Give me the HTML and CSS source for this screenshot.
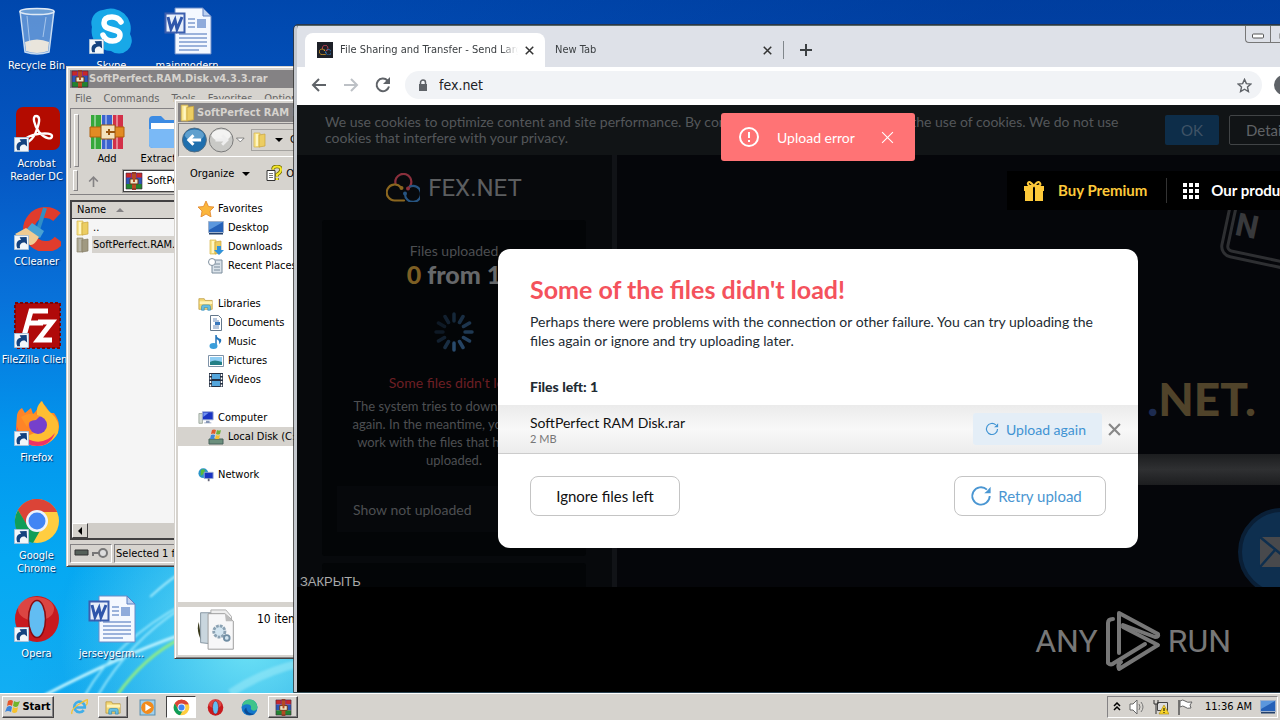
FILE: index.html
```html
<!DOCTYPE html>
<html lang="en">
<head>
<meta charset="utf-8">
<title>Desktop</title>
<link rel="stylesheet" href="styles.css">
</head>
<body>
<svg class="defs" aria-hidden="true">
  <symbol id="arrow" viewBox="0 0 16 16"><path d="M.5.5h15v15H.5z" fill="#f2f6fa" stroke="#a9c0d8"/><path d="M3.500 14c-2-5 0-9 4-9L6 2.500 13.500 2l.5 8-2.500-2c-4 0-6 2-5 6z" fill="#14427f"/></symbol>
  <symbol id="word" viewBox="0 0 48 48"><path d="M11 1h28l8 8v38H11z" fill="#f4f8ff" stroke="#6b8cc8"/><path d="M39 1v8h8z" fill="#bcd0f0" stroke="#5d7fc0"/><path d="M24 12h7M24 16h7M24 20h7M15 27h28M15 31h28M15 35h28M15 39h28M15 43h20" stroke="#7d9bd0" stroke-width="1.500"/><path d="M33 12h9v9h-9z" fill="#8fabdb"/><path d="M1.500 6.500h19v19h-19z" fill="#e8effa" stroke="#3c5fae" stroke-width="2"/><path d="M4 10l3 12 4-9 2 9 5-12" fill="none" stroke="#2f56ab" stroke-width="3"/></symbol>
  <symbol id="rar" viewBox="0 0 18 18"><path d="M1 1h16v5H1z" fill="#8c2c7c"/><path d="M1 6h16v6H1z" fill="#2b56b6"/><path d="M1 12h16v5H1z" fill="#218331"/><path d="M1 1h5v4H1zM12 1h5v4h-5z" fill="#c82828"/><path d="M7 0h4v18H7z" fill="#b54b22"/><path d="M5 7h8v5H5z" fill="#eee3c3" stroke="#6e3210"/><path d="M8 6h2v4H8z" fill="#b54b22"/><path d="M1 1h16v16H1z" fill="none" stroke="#40243c" stroke-width=".6"/></symbol>
  <symbol id="folder" viewBox="0 0 16 16"><path d="M2 1h6v14H2z" fill="#f8e48c" stroke="#d7b54c" stroke-width=".7"/><path d="M7 3l6-1v12l-6 1z" fill="#eccd62" stroke="#c9a43d" stroke-width=".7"/><path d="M4 2h2v12H4z" fill="#fff6c2"/></symbol>
  <symbol id="chrome" viewBox="0 0 48 48"><circle cx="24" cy="24" r="22" fill="#ffcd40"/><path d="M5 13A22 22 0 0 1 43 13L44 15H24z" fill="#db4437"/><path d="M5 13l9 16a11 11 0 0 1 10-14h20A22 22 0 0 0 5 13z" fill="#db4437"/><path d="M5 13a22 22 0 0 0 15 33l8-14q-9 3-14-4z" fill="#0f9d58"/><circle cx="24" cy="24" r="11" fill="#eef3fd"/><circle cx="24" cy="24" r="8.500" fill="#4285f4"/></symbol>
  <symbol id="opera" viewBox="0 0 48 48"><ellipse cx="24" cy="24" rx="22" ry="23" fill="#c81a1f"/><ellipse cx="23" cy="14" rx="18" ry="12" fill="#ec6a5e" opacity=".55"/><ellipse cx="24" cy="24" rx="8.500" ry="18.500" fill="#62bdf2"/><ellipse cx="24" cy="24" rx="8.500" ry="18.500" fill="none" stroke="#8a0c10" stroke-width="1.500"/></symbol>
  <symbol id="explorer" viewBox="0 0 18 16"><path d="M1 2h6l1 2h8v10H1z" fill="#f3d774" stroke="#b8963b" stroke-width=".8"/><path d="M2 5h14v3H2z" fill="#fff3b6"/><path d="M4 15v-4q0-2 2-2h6q2 0 2 2v4h-3v-3H7v3z" fill="#65bfe4" stroke="#2f88b5" stroke-width=".7"/></symbol>
  <symbol id="monitor" viewBox="0 0 16 14"><path d="M.5.5h15v11H.5z" fill="#2561b8" stroke="#9fb2cc"/><path d="M1 1h14l-14 8z" fill="#5b97dd"/><path d="M1 12h14v1.500H1z" fill="#23406b"/></symbol>
  <symbol id="pc" viewBox="0 0 18 16"><path d="M1 3h4v11H1z" fill="#d3dbd4" stroke="#7e8d80" stroke-width=".7"/><path d="M5 1h12v9H5z" fill="#1a35c2" stroke="#9aaad2"/><path d="M6 2h6l-6 5z" fill="#6f92f0"/><path d="M9 11h4v2h2v1H7v-1h2z" fill="#8394b5"/></symbol>
  <symbol id="retry" viewBox="0 0 24 24"><path d="M21.500 12a9.500 9.500 0 1 1-3-7" fill="none" stroke="currentColor" stroke-width="2"/><path d="M22.500 2v7h-7l3-2.500z" fill="currentColor"/></symbol>
  <symbol id="cross" viewBox="0 0 12 12"><path d="M1 1l10 10M11 1L1 11" fill="none" stroke="currentColor"/></symbol>
  <symbol id="cloud" viewBox="0 0 34 28"><g fill="none" stroke-width="2.200" stroke-linecap="round"><path d="M9.500 10a8 8 0 1 1 13 4.500" stroke="#e2495c"/><path d="M18 27H9a8 8 0 1 1 6-13" stroke="#e3a52c"/><path d="M19 20a8 8 0 1 0 5-7" stroke="#3c86cf"/></g><circle cx="15.500" cy="14.500" r="2" fill="#e3a52c"/><circle cx="22" cy="15" r="2" fill="#e2495c"/><circle cx="19" cy="20" r="2" fill="#3c86cf"/></symbol>
</svg>

<main class="desktop">
  <svg class="wallpaper" viewBox="0 0 300 692" preserveAspectRatio="xMinYMax slice" aria-hidden="true">
    <defs><filter id="soft"><feGaussianBlur stdDeviation="1.200"/></filter></defs>
    <g fill="none" filter="url(#soft)"><path d="M45 694Q120 655 180 634T300 596" stroke="#bdf3ff" stroke-width="3"/><path d="M85 694Q115 640 185 602" stroke="#8fe4fb" stroke-width="2"/><path d="M98 694Q130 640 180 608" stroke="#8fe4fb" stroke-width="2"/><path d="M117 694Q145 655 180 638" stroke="#8deb8a" stroke-width="3"/><path d="M150 596Q165 582 180 572" stroke="#a7ecfc" stroke-width="2"/><path d="M230 692Q260 672 300 662" stroke="#a3eefa" stroke-width="8" opacity=".5"/></g>
  </svg>

  <nav class="shortcuts" aria-label="Desktop icons">
    <a href="#" class="shortcut c1 r1"><svg viewBox="0 0 48 48"><path d="M7 4h34l-5 41q-12 4-24 0z" fill="#8bb6e6" opacity=".65"/><path d="M12 35q12-5 24 0l-1 9q-11 4-22 0z" fill="#e9e5dc"/><path d="M7 4l5 41q12 4 24 0l5-41" fill="none" stroke="#c8dcf2" stroke-width="1.500"/><ellipse cx="24" cy="4.500" rx="17" ry="3" fill="#6d9fd6" stroke="#dfe9f5" stroke-width="1.500"/><path d="M14 9l3 30M33 10l-3 20" stroke="#d9e9fa" opacity=".6"/></svg><span>Recycle Bin</span></a>
    <a href="#" class="shortcut c2 r1"><svg viewBox="0 0 48 48"><path d="M15 3a20 20 0 0 1 27 24 13 13 0 0 1-19 17A20 20 0 0 1 4 20 13 13 0 0 1 15 3z" fill="#18a8e8"/><path d="M33 15q-3-5-9-5-8 0-8 6c0 9 16 4 16 12 0 8-14 8-17 0" fill="none" stroke="#fff" stroke-width="5.500" stroke-linecap="round"/><use href="#arrow" x="1" y="32" width="15" height="15"/></svg><span>Skype</span></a>
    <a href="#" class="shortcut c3 r1"><svg><use href="#word"/></svg><span>mainmodern...</span></a>
    <a href="#" class="shortcut c1 r2"><svg viewBox="0 0 48 48"><rect x="3" y="2" width="44" height="43" rx="7" fill="#b30b00"/><path d="M23 11c-4 0-2 9 3 16 6 7 13 8 13 4 0-5-25-2-27 4-1 5 8 2 12-11 3-8 3-13-1-13z" fill="none" stroke="#fff" stroke-width="2.400"/><use href="#arrow" x="1" y="32" width="15" height="15"/></svg><span>Acrobat Reader DC</span></a>
    <a href="#" class="shortcut c1 r3"><svg viewBox="0 0 48 48"><path d="M44 14A17 17 0 1 0 46 37" fill="none" stroke="#e03c2c" stroke-width="11"/><path d="M32 5l-7 22" stroke="#2f8ec6" stroke-width="4"/><path d="M19 20l12 8-4 7-14-8z" fill="#48a2d2"/><path d="M13 25l13 9q-5 9-9 8L2 31z" fill="#f0cb92"/><use href="#arrow" x="1" y="32" width="15" height="15"/></svg><span>CCleaner</span></a>
    <a href="#" class="shortcut c1 r4"><svg viewBox="0 0 48 48"><path d="M2 2h45v45H2z" fill="#b00a0a" stroke="#7c0505" stroke-width="2" stroke-dasharray="3 2"/><path d="M11 35L18 10h17M15 22h15M25 21h14L25 39h14" fill="none" stroke="#fff" stroke-width="5"/><use href="#arrow" x="1" y="32" width="15" height="15"/></svg><span class="nowrap">FileZilla Client</span></a>
    <a href="#" class="shortcut c1 r5"><svg viewBox="0 0 48 48"><path d="M4 16q1-5 5-7l3 5 6-5 2 6q5-4 8-13 6 6 9 12l4 0q9 12 2 23-7 10-19 10Q5 46 3 29z" fill="#ff8427"/><path d="M24 14q-1-7 5-12 3 7 9 12 10 8 7 20-8 13-22 13-9-1-16-7l17-7z" fill="#ffbe32"/><path d="M3 24q2 14 17 18 13 3 22-8-5 13-18 13Q5 46 3 24z" fill="#ef3366"/><circle cx="25" cy="26" r="9" fill="#7540cc"/><path d="M8 18q9-6 19-1l-4 4q-8 0-9 7z" fill="#ff9425"/><use href="#arrow" x="1" y="32" width="15" height="15"/></svg><span>Firefox</span></a>
    <a href="#" class="shortcut c1 r6"><svg viewBox="0 0 48 48"><use href="#chrome" width="48" height="48"/><use href="#arrow" x="1" y="32" width="15" height="15"/></svg><span>Google Chrome</span></a>
    <a href="#" class="shortcut c1 r7"><svg viewBox="0 0 48 48"><use href="#opera" width="48" height="48"/><use href="#arrow" x="1" y="32" width="15" height="15"/></svg><span>Opera</span></a>
    <a href="#" class="shortcut c2 r7"><svg><use href="#word"/></svg><span class="nowrap">jerseygerm...</span></a>
  </nav>

  <section class="window winrar" aria-label="WinRAR">
    <header class="caption"><svg class="i18"><use href="#rar"/></svg>SoftPerfect.RAM.Disk.v4.3.3.rar</header>
    <div class="menubar"><span>File</span><span>Commands</span><span>Tools</span><span>Favorites</span><span>Options</span></div>
    <div class="toolbar">
      <button class="tool"><svg viewBox="0 0 36 36"><path d="M2 1h10v34H2z" fill="#35a83a"/><path d="M13 1h10v34H13z" fill="#3a63cf"/><path d="M24 1h10v34H24z" fill="#d33049"/><path d="M5 1h2v34H5zM16 1h2v34h-2zM27 1h2v34h-2z" fill="#fff" opacity=".4"/><path d="M1 13h34v10H1z" fill="#e28b23" stroke="#b1600c"/><path d="M12 11h14v14H12z" fill="#f4e2bd" stroke="#9a5712"/><path d="M17 18h9M20 15v6" stroke="#9a5712" stroke-width="2"/></svg><span>Add</span></button>
      <button class="tool"><svg viewBox="0 0 36 36"><path d="M2 6q0-4 4-4h8l4 4h14q4 0 4 4v20q0 4-4 4H6q-4 0-4-4z" fill="#3c8be3"/><path d="M4 9h30v8H4z" fill="#fff"/><path d="M2 15h34v15q0 4-4 4H6q-4 0-4-4z" fill="#7ab9f6"/></svg><span>Extract To</span></button>
    </div>
    <div class="pathbar"><svg class="up" viewBox="0 0 12 12"><path d="M6 11V2M2 6l4-4 4 4" fill="none" stroke="#848284" stroke-width="1.500"/></svg><div class="path"><svg class="i18"><use href="#rar"/></svg>SoftPerfect.RAM</div></div>
    <div class="filelist">
      <div class="colhead">Name<i></i></div>
      <div class="file"><svg class="i16"><use href="#folder"/></svg><span>..</span></div>
      <div class="file picked"><svg class="i16 dim"><use href="#folder"/></svg><span>SoftPerfect.RAM.Disk</span></div>
      <div class="scroll"><button aria-label="Scroll left"><svg viewBox="0 0 8 8"><path d="M6 0v8L2 4z"/></svg></button></div>
    </div>
    <footer class="status"><div class="cell icons"><svg viewBox="0 0 36 12"><path d="M1 3h13v5H1z" fill="#56615a" stroke="#333"/><circle cx="29" cy="6" r="4" fill="#ddd" stroke="#777" stroke-width="2"/><path d="M25 6h-6v3" stroke="#777" stroke-width="2" fill="none"/></svg></div><div class="cell">Selected 1 folder</div></footer>
  </section>

  <section class="window files" aria-label="Explorer">
    <header class="caption"><svg class="i18"><use href="#folder"/></svg>SoftPerfect RAM Disk</header>
    <div class="navbar">
      <svg class="back" viewBox="0 0 68 28"><circle cx="13" cy="14" r="12.500" fill="#1f6fae" stroke="#516b80"/><ellipse cx="13" cy="9" rx="10" ry="6" fill="#7ab4da" opacity=".7"/><path d="M20 14H8M12 9l-5 5 5 5" fill="none" stroke="#fff" stroke-width="3"/><circle cx="41" cy="14" r="12.500" fill="#c9c9c6" stroke="#777"/><ellipse cx="41" cy="9" rx="10" ry="6" fill="#f3f3f2"/><path d="M35 14h11M42 9l5 5-5 5" fill="none" stroke="#eee" stroke-width="3"/><path d="M57 12h8l-4 4z" fill="#fff" stroke="#555" stroke-width=".7"/></svg>
      <div class="address"><svg class="i16"><use href="#folder"/></svg><i class="down"></i>Co</div>
    </div>
    <div class="commands"><span>Organize</span><i class="down"></i><svg viewBox="0 0 16 16"><path d="M1 5h8v10H1z" fill="#fff" stroke="#333"/><path d="M3 8h4M3 10h4M3 12h4" stroke="#777"/><path d="M7 4q0-3 4-3t4 3-4 5v2m0 1.500v2" fill="none" stroke="#6e6800" stroke-width="3.500"/><path d="M7 4q0-3 4-3t4 3-4 5v2m0 1.500v2" fill="none" stroke="#f5e72c" stroke-width="2"/></svg><span>Open</span></div>
    <ul class="tree">
      <li><svg viewBox="0 0 16 16"><path d="M8 0l2.500 5.500 5.500.5-4 4 1 6-5-3-5 3 1-6L0 6l5.500-.5z" fill="#fbb63c" stroke="#e08428" stroke-width=".8"/></svg>Favorites</li>
      <li class="sub"><svg><use href="#monitor"/></svg>Desktop</li>
      <li class="sub"><svg viewBox="0 0 16 16"><use href="#folder" width="16" height="16"/><path d="M9 7h4v4h3l-5 5-5-5h3z" fill="#2f92dc"/></svg>Downloads</li>
      <li class="sub"><svg viewBox="0 0 16 16"><path d="M4 2h10v13H4z" fill="#dbe3ea" stroke="#7b8c9c"/><path d="M6 6h6M6 9h6M6 12h6" stroke="#7b8c9c"/><circle cx="4" cy="4" r="3.500" fill="#fff" stroke="#8191a0"/></svg>Recent Places</li>
      <li class="gap"><svg><use href="#explorer"/></svg>Libraries</li>
      <li class="sub"><svg viewBox="0 0 16 16"><path d="M2.500.5h8l3 3v12h-11z" fill="#fff" stroke="#64788c"/><path d="M5 4h4M5 6h6M5 11h6M5 13h6" stroke="#6c8dba"/><path d="M7 7h5v3H7z" fill="#3978bd"/></svg>Documents</li>
      <li class="sub"><svg viewBox="0 0 16 16"><path d="M8 1v10" stroke="#2476bb" stroke-width="1.500"/><ellipse cx="5.500" cy="12" rx="4" ry="3" fill="#3a9edb"/><path d="M8 1q1 3 5 4 1 3-2 5 1-4-3-5z" fill="#2476bb"/></svg>Music</li>
      <li class="sub"><svg viewBox="0 0 16 14"><path d="M.5 1.500h15v11H.5z" fill="#fff" stroke="#7f93a8"/><path d="M2 3h12v8H2z" fill="#8ecdf3"/><path d="M2 8q4-3 12 0v3H2z" fill="#237f86"/></svg>Pictures</li>
      <li class="sub"><svg viewBox="0 0 16 16"><path d="M1 1h14v14H1z" fill="#243043"/><path d="M4 2h8v5H4zM4 9h8v5H4z" fill="#54a6dc"/><path d="M2.500 2v13M13.500 2v13" stroke="#fff" stroke-width="1.500" stroke-dasharray="2 1.500"/></svg>Videos</li>
      <li class="gap"><svg><use href="#pc"/></svg>Computer</li>
      <li class="sub on"><svg viewBox="0 0 16 16"><path d="M1 10h14v5H1z" fill="#6c8f7d" stroke="#47615a"/><path d="M4 1q2-1 4 0L7 5q-2-1-4 0z" fill="#e05a2b"/><path d="M9 1q2 1 4 0l-1 4q-2 1-4 0z" fill="#6fb03a"/><path d="M3 6q2-1 4 0l-1 4H2z" fill="#3f86d6"/><path d="M8 6q2 1 4 0l-1 4H7z" fill="#f2c02e"/></svg>Local Disk (C:)</li>
      <li class="gap"><svg viewBox="0 0 18 16"><circle cx="6" cy="6" r="5.500" fill="#2a94c9"/><path d="M3 3q3-3 5 0L6 7 3 9z" fill="#5ab93c"/><path d="M7 5h10v7H7z" fill="#1a35c2" stroke="#9aaad2"/><path d="M11 12h2v3h-2z" fill="#667"/></svg>Network</li>
    </ul>
    <footer class="details"><svg viewBox="0 0 42 46"><path d="M2 14q-3 10 3 20z" fill="#3a3a1c"/><path d="M4 4h18v34L4 36z" fill="#c9d6de" stroke="#8494a0"/><path d="M15 1h16l6 7v28H15z" fill="#eee" stroke="#aaa"/><path d="M12 5h18l9 8v30H12z" fill="#f7f7f8" stroke="#999"/><path d="M30 5l1 8h8z" fill="#bbb"/><circle cx="24" cy="24" r="6" fill="#d3e5f0" stroke="#8ba2b3" stroke-width="3" stroke-dasharray="3 1"/><circle cx="32" cy="31" r="3" fill="#d3e5f0" stroke="#6f8da3" stroke-width="2"/></svg>10 items</footer>
  </section>

  <section class="browser" aria-label="Browser">
    <header class="tabs">
      <div class="tab active"><svg class="fav" viewBox="0 0 16 16"><path d="M0 0h16v16H0z" fill="#1d2027"/><use href="#cloud" x="2" y="3" width="12" height="10"/></svg><span class="title">File Sharing and Transfer - Send Large Files</span><button aria-label="Close tab"><svg><use href="#cross"/></svg></button></div>
      <div class="tab"><span class="title">New Tab</span><button aria-label="Close tab"><svg><use href="#cross"/></svg></button></div>
      <button class="plus" aria-label="New tab"><svg viewBox="0 0 12 12"><path d="M6 0v12M0 6h12" stroke="#3c4043" stroke-width="2"/></svg></button>
      <div class="winctl"><button aria-label="Minimize"><svg viewBox="0 0 12 5"><rect x=".5" y=".5" width="11" height="4" rx="1" fill="#fff" stroke="#555"/></svg></button><button aria-label="Maximize"><svg viewBox="0 0 12 10"><rect x=".5" y=".5" width="11" height="9" rx="1" fill="#fff" stroke="#555"/></svg></button></div>
    </header>
    <div class="urlbar">
      <button aria-label="Back"><svg viewBox="0 0 16 16"><path d="M15 8H2M8 2L2 8l6 6" fill="none" stroke="#5f6368" stroke-width="2"/></svg></button>
      <button aria-label="Forward"><svg viewBox="0 0 16 16"><path d="M1 8h13M8 2l6 6-6 6" fill="none" stroke="#bdc1c6" stroke-width="2"/></svg></button>
      <button aria-label="Reload"><svg viewBox="0 0 16 16"><path d="M14 9.500A6.300 6.300 0 1 1 12.500 3.500" fill="none" stroke="#5f6368" stroke-width="2"/><path d="M15 0v7H8z" fill="#5f6368"/></svg></button>
      <div class="omni"><svg class="lock" viewBox="0 0 10 13"><path d="M1 5h8v7H1z" fill="#5f6368"/><path d="M2.500 6V3.500a2.500 2.500 0 0 1 5 0V6" fill="none" stroke="#5f6368" stroke-width="1.500"/></svg><input type="text" aria-label="Address" value="fex.net"><svg class="star" viewBox="0 0 16 16"><path d="M8 1.500l2 4.500 4.800.5-3.600 3.200 1 4.800L8 12l-4.200 2.500 1-4.800L1.200 6.500 6 6z" fill="none" stroke="#5f6368" stroke-width="1.500"/></svg></div>
      <i class="avatar"></i>
    </div>
    <div class="page">
      <div class="cookies"><p>We use cookies to optimize content and site performance. By continuing to use, you agree with the use of cookies. We do not use cookies that interfere with your privacy.</p><button class="ok">OK</button><button class="more">Details</button></div>
      <div class="body">
        <aside class="side">
          <div class="brand"><svg><use href="#cloud"/></svg>FEX.NET</div>
          <div class="card">
            <p class="small">Files uploaded</p>
            <p class="count"><b>0</b> from 1</p>
            <svg class="spin" viewBox="-20 -20 40 40" stroke="#4f8fd0" stroke-width="3.500" stroke-linecap="round"><path d="M0 11v7"/><path d="M5.500 9.500l3.500 6" opacity=".9"/><path d="M9.500 5.500l6 3.500" opacity=".85"/><path d="M11 0h7" opacity=".75"/><path d="M9.500-5.500l6-3.500" opacity=".7"/><path d="M5.500-9.500l3.500-6" opacity=".6"/><path d="M0-11v-7" opacity=".5"/><path d="M-5.500-9.500l-3.500-6" opacity=".4"/><path d="M-9.500-5.500l-6-3.500" opacity=".3"/><path d="M-11 0h-7" opacity=".3"/><path d="M-9.500 5.500l-6 3.500" opacity=".4"/><path d="M-5.500 9.500l-3.500 6" opacity=".6"/></svg>
            <p class="fail">Some files didn't load</p>
            <p class="note">The system tries to download them<br>again. In the meantime, you can still<br>work with the files that have been<br>uploaded.</p>
            <button class="show">Show not uploaded</button>
          </div>
          <div class="card next"></div>
        </aside>
        <div class="hero">
          <nav class="premium"><svg class="gift" viewBox="0 0 20 20"><path d="M0 5h9v5H0zM11 5h9v5h-9zM1 9h8v11H1zM11 9h8v11h-8z"/><path d="M9 5Q3 5 4 2t6 3q4-6 6-3t-5 3" fill="none" stroke="#fdc93a" stroke-width="2"/></svg><a href="#" class="buy">Buy Premium</a><a href="#" class="prod"><svg viewBox="0 0 16 16"><path d="M0 0h4v4H0zM6 0h4v4H6zM12 0h4v4h-4zM0 6h4v4H0zM6 6h4v4H6zM12 6h4v4h-4zM0 12h4v4H0zM6 12h4v4H6zM12 12h4v4h-4z" fill="#fff"/></svg>Our products</a></nav>
          <div class="stamp">N</div>
          <div class="slogan"><i>.</i>NET.</div>
          <div class="band"></div>
          <div class="mail"><svg viewBox="0 0 46 32"><path d="M1 1h44v30H1z" fill="#48494c"/><path d="M1 1l22 18L45 1M1 31l15-17M45 31L30 14" fill="none" stroke="#0e2f4f" stroke-width="2.500"/></svg></div>
        </div>
      </div>
      <p class="dismiss">ЗАКРЫТЬ</p>
      <div class="toast" role="alert"><svg viewBox="0 0 20 20"><circle cx="10" cy="10" r="9" fill="none" stroke="#fff" stroke-width="2"/><path d="M10 5v6M10 13v2" stroke="#fff" stroke-width="2"/></svg><span>Upload error</span><button aria-label="Close"><svg><use href="#cross"/></svg></button></div>
      <div class="dialog" role="dialog" aria-labelledby="dlg">
        <h1 id="dlg">Some of the files didn't load!</h1>
        <p class="lead">Perhaps there were problems with the connection or other failure. You can try uploading the files again or ignore and try uploading later.</p>
        <h2>Files left: 1</h2>
        <div class="row"><div class="name">SoftPerfect RAM Disk.rar<small>2 MB</small></div><button class="again"><svg><use href="#retry"/></svg>Upload again</button><button class="x" aria-label="Remove"><svg><use href="#cross"/></svg></button></div>
        <div class="actions"><button>Ignore files left</button><button class="retry"><svg><use href="#retry"/></svg>Retry upload</button></div>
      </div>
      <div class="anyrun"><span>ANY</span><svg viewBox="0 0 56 62"><g fill="none" stroke="currentColor" stroke-width="4" stroke-linejoin="round" stroke-linecap="round"><path d="M14 43V3L53 24q1 3-3 3L18 15"/><path d="M8 9Q3 9 3 13v40q3 3 6 0L40 34"/><path d="M18 17l35 18-39 24q-2-4 2-7"/></g></svg><span>RUN</span></div>
    </div>
  </section>
</main>

<footer class="taskbar">
  <button class="start"><svg viewBox="0 0 16 16"><path d="M3 2q3-2 5 0L7 7Q5 5 2 7z" fill="#e4572c"/><path d="M9 2q3 2 6 0l-2 5q-2 2-5 0z" fill="#72b52c"/><path d="M2 8q3-2 5 0l-1 5q-3-2-6 0z" fill="#3c86dc"/><path d="M8 8q3 2 5 0l-1 5q-3 2-5 0z" fill="#f6c22d"/></svg>Start</button>
  <div class="tasks">
    <button aria-label="Internet Explorer"><svg viewBox="0 0 16 16"><path d="M12 10.500A5 5 0 1 1 13 8H4" fill="none" stroke="#41aee8" stroke-width="2.500"/><path d="M1 14Q-1 10 9 4t6-1q1 1-1 3" fill="none" stroke="#f2c33a" stroke-width="1.300"/></svg></button>
    <button class="open" aria-label="Explorer"><svg><use href="#explorer"/></svg></button>
    <button aria-label="Media Player"><svg viewBox="0 0 16 16"><path d="M1 1h14v14H1z" fill="#9fd0ee" stroke="#5b8fae"/><circle cx="8" cy="8" r="6" fill="#f28b1c"/><path d="M6 4.500v7L11.500 8z" fill="#fff"/></svg></button>
    <button class="open current" aria-label="Chrome"><svg><use href="#chrome"/></svg></button>
    <button aria-label="Opera"><svg><use href="#opera"/></svg></button>
    <button aria-label="Edge"><svg viewBox="0 0 16 16"><circle cx="8" cy="8" r="7.500" fill="#1478cc"/><path d="M1 7Q2 .5 8 .5T15.500 7q0 4-4 4-3-1-2-3 0-3-4-3-3 0-4.500 2z" fill="#3fc48b"/><path d="M5 8q0 6 8 6-4 2-8 0-4-3 0-6z" fill="#0b4a94"/></svg></button>
    <button class="open" aria-label="WinRAR"><svg><use href="#rar"/></svg></button>
  </div>
  <div class="tray">
    <svg class="chev" viewBox="0 0 8 10"><path d="M1 4l3-3 3 3M1 8l3-3 3 3" fill="none" stroke="#000" stroke-width="1.500"/></svg>
    <svg viewBox="0 0 16 16"><path d="M1 5h3l4-4v14l-4-4H1z" fill="#fff" stroke="#666"/><path d="M10 5q2 3 0 6M12 3q4 5 0 10" fill="none" stroke="#777"/></svg>
    <svg viewBox="0 0 16 16"><path d="M4.500 3.500h10v8h-10z" fill="#ddd" stroke="#444"/><path d="M1 1v4h4V1M3 5v10" stroke="#333" fill="none"/><path d="M11 6l5 9H6z" fill="#f8d52a" stroke="#a98500" stroke-width=".6"/><path d="M11 9v3M11 13v1" stroke="#000"/></svg>
    <svg viewBox="0 0 16 16"><path d="M2 1v15" stroke="#555" stroke-width="1.500"/><path d="M3 2q3-2 5 0t7 1l-2 3 1 3q-4 1-6-1t-5 0z" fill="#fff" stroke="#666"/></svg>
    <time>11:36 AM</time>
    <svg><use href="#monitor"/></svg>
  </div>
</footer>
</body>
</html>
```
FILE: styles.css
```css
* { box-sizing: border-box; }
body { margin: 0; height: 100vh; display: flex; flex-direction: column; overflow: hidden; font: 11px/14px "DejaVu Sans Condensed", "Noto Sans", sans-serif; color: #000; }
button { font: inherit; color: inherit; border: 0; padding: 0; background: none; display: flex; align-items: center; justify-content: center; }
p, h1, h2, ul { margin: 0; padding: 0; font-weight: 400; }
a { color: inherit; text-decoration: none; }
svg { display: block; flex: none; }
.defs { position: absolute; width: 0; height: 0; }
.i16 { width: 16px; height: 16px; }
.i18 { width: 18px; height: 18px; }

.desktop { flex: 1; position: relative; overflow: hidden; background: radial-gradient(ellipse 190px 190px at 250px 640px, #6fe3f6, #6fe3f600), linear-gradient(115deg, transparent 300px, #00308a66 900px), linear-gradient(#0047ad, #0558c4 170px, #0872da 300px, #0297ee 440px, #05a8f2 560px, #12aef3); }
.wallpaper { position: absolute; left: 0; bottom: 0; width: 300px; height: 100%; }

.shortcuts { position: relative; display: grid; width: 225px; grid-template-columns: repeat(3, 75px); grid-template-rows: repeat(7, 98px); padding-top: 7px; color: #fff; }
.shortcut { display: flex; flex-direction: column; align-items: center; gap: 4px; line-height: 13px; text-align: center; text-shadow: 1px 1px 1px #002a66; }
.shortcut svg { width: 48px; height: 48px; }
.shortcut span { width: 64px; }
.shortcut .nowrap { width: auto; white-space: nowrap; }
.c1 { grid-column: 1; } .c2 { grid-column: 2; } .c3 { grid-column: 3; }
.c1, .c2 { padding-right: 2px; }
.r1 { grid-row: 1; } .r2 { grid-row: 2; } .r3 { grid-row: 3; } .r4 { grid-row: 4; } .r5 { grid-row: 5; } .r6 { grid-row: 6; } .r7 { grid-row: 7; }

.window { position: absolute; display: flex; flex-direction: column; overflow: hidden; white-space: nowrap; background: #d6d3ce; border: 1px solid #d6d3ce; border-bottom-color: #424142; box-shadow: inset 1px 1px #fff, inset 0 -1px #848284; padding: 3px; }
.caption { display: flex; align-items: center; height: 18px; flex: none; background: #848284; color: #d6d3ce; font-size: 11px; font-weight: 700; padding-left: 1px; }
.winrar { left: 66px; top: 66px; width: 300px; height: 501px; }
.menubar { display: flex; gap: 12px; padding: 4px 5px 2px; color: #666; flex: none; }
.toolbar { display: flex; gap: 2px; height: 60px; flex: none; border-top: 1px solid #848284; border-left: 1px solid #848284; padding: 5px 4px 0 7px; }
.toolbar::before, .pathbar::before { content: ""; width: 3px; border: 1px solid; border-color: #fff #848284 #848284 #fff; margin-bottom: 1px; }
.tool { flex-direction: column; justify-content: flex-start; width: 52px; }
.tool + .tool { margin-left: 4px; }
.toolbar::before { margin-left: -4px; }
.tool svg { width: 36px; height: 36px; }
.tool span { line-height: 18px; }
.pathbar { display: flex; align-items: center; gap: 9px; height: 27px; flex: none; border-bottom: 1px solid #848284; padding: 2px 3px; }
.pathbar::before { align-self: stretch; }
.up { width: 13px; height: 13px; }
.path { flex: 1; display: flex; align-items: center; gap: 4px; height: 22px; margin-left: 14px; background: #fff; border: 1px solid #424142; outline: 1px solid #a5a3a0; padding-left: 1px; }
.filelist { flex: 1; display: flex; flex-direction: column; background: #f5f5f5; border: 2px solid #424142; margin-top: 5px; }
.colhead { display: flex; align-items: center; gap: 10px; height: 17px; flex: none; background: #d6d3ce; border-bottom: 1px solid #424142; padding-left: 5px; }
.colhead i { border: 4px solid transparent; border-bottom-color: #848284; margin-top: -5px; }
.file { display: flex; align-items: center; gap: 1px; height: 17px; flex: none; padding-left: 3px; }
.file span { padding: 0 1px; line-height: 17px; }
.picked span { background: #d6d3ce; }
.dim { filter: grayscale(.7) brightness(.75); }
.scroll { height: 15px; margin-top: auto; background: #d0cdc8; flex: none; }
.scroll button { width: 16px; height: 15px; background: #d6d3ce; border: 1px solid; border-color: #fff #424142 #424142 #fff; }
.scroll svg { width: 8px; height: 8px; }
.status { display: flex; gap: 2px; height: 19px; flex: none; margin-top: 4px; }
.cell { flex: 1; border: 1px solid; border-color: #848284 #fff #fff #848284; padding: 1px; line-height: 15px; }
.icons { flex: 0 0 42px; }
.icons svg { width: 36px; height: 14px; margin-left: 2px; }

.files { left: 174px; top: 99px; width: 300px; height: 560px; }
.files .caption { height: 19px; }
.navbar { display: flex; align-items: center; gap: 4px; height: 34px; flex: none; margin-top: 1px; border: 1px solid; border-color: #848284 #fff #fff #848284; padding-left: 3px; }
.back { width: 65px; height: 28px; }
.address { flex: 1; display: flex; align-items: center; gap: 7px; height: 22px; border: 1px solid #a5a3a0; }
.down { border: 4px solid transparent; border-top-color: #000; margin-top: 4px; }
.commands { display: flex; align-items: center; gap: 8px; height: 33px; flex: none; padding-left: 12px; }
.commands svg { width: 16px; height: 17px; margin-left: 8px; }
.commands span:last-child { margin-left: -4px; }
.tree { flex: 1; list-style: none; background: #fff; padding-top: 9px; }
.tree li { display: flex; align-items: center; gap: 4px; height: 19px; padding-left: 20px; }
.tree .sub { padding-left: 30px; }
.tree .gap { margin-top: 19px; }
.tree svg { width: 16px; height: 16px; }
.tree .on { background: #d6d3ce; }
.details { display: flex; gap: 20px; height: 48px; flex: none; margin-top: 5px; background: #fff; padding: 2px 0 0 18px; font-size: 12px; line-height: 20px; }
.details svg { width: 41px; height: 43px; }

.browser { position: absolute; left: 294px; right: -20px; top: 25px; bottom: 1px; display: flex; flex-direction: column; border-left: 3px solid #c4c8ce; border-top: 1px solid #566; border-radius: 4px 0 0 0; outline: 1px solid #333c; background: #000; overflow: hidden; }
.tabs { display: flex; height: 41px; flex: none; background: #dee1e8; padding: 7px 5px 0 8px; align-items: stretch; }
.tab { display: flex; align-items: center; width: 239px; padding: 0 11px 0 11px; gap: 7px; color: #3c4043; }
.tab.active { width: 240px; background: #fff; border-radius: 8px 8px 0 0; padding-left: 12px; }
.title { flex: 1; white-space: nowrap; overflow: hidden; line-height: 18px; mask-image: linear-gradient(90deg, #000 90%, transparent); }
.fav { width: 16px; height: 16px; }
.tab button svg { width: 9px; height: 9px; stroke-width: 2; color: #333; }
.tab:not(.active) { border-right: 1px solid #80868b; margin: 8px 0; padding-left: 10px; }
.plus { width: 44px; }
.plus svg { width: 12px; height: 12px; }
.winctl { display: flex; margin: -7px 0 0 auto; height: 17px; }
.winctl button { width: 25px; border: 1px solid #777; border-top: 0; border-left-width: 1px; }
.winctl button:first-child { border-radius: 0 0 0 4px; border-right: 0; }
.winctl svg { width: 12px; height: 6px; margin-top: 4px; }
.urlbar { display: flex; align-items: center; gap: 16px; height: 38px; flex: none; background: #fff; padding: 0 6px 2px 14px; }
.urlbar > button svg { width: 16px; height: 16px; }
.omni { flex: 1; display: flex; align-items: center; gap: 11px; height: 28px; border-radius: 14px; background: #f1f3f6; margin-left: -2px; padding: 0 10px 0 13px; }
.omni input { flex: 1; border: 0; background: none; padding: 0; font: 14px/20px "DejaVu Sans Condensed", sans-serif; color: #202124; }
.lock { width: 10px; height: 13px; }
.star { width: 15px; height: 15px; }
.avatar { width: 20px; height: 20px; border-radius: 10px; background: #5f6368; margin-left: -4px; }

.page { position: relative; flex: 1; display: flex; flex-direction: column; background: #000; font-family: Lato, "Noto Sans", sans-serif; font-size: 14px; line-height: 19px; }
.cookies { display: flex; align-items: center; gap: 10px; height: 50px; flex: none; background: #111416; color: #54575a; padding: 0 0 0 28px; }
.cookies p { flex: 1; padding-right: 20px; line-height: 16px; }
.cookies button { height: 30px; border-radius: 2px; font-size: 15px; color: #3f5366; width: 54px; background: #0d2d49; flex: none; }
.cookies .more { width: 71px; justify-content: flex-start; padding-left: 16px; border: 1px solid #414446; background: none; color: #606366; }
.body { display: flex; height: 432px; flex: none; overflow: hidden; }
.side { width: 320px; flex: none; background: #07090c; border-right: 5px solid #111317; padding: 17px 26px 0 25px; text-align: center; color: #4d4f52; }
.brand { display: flex; align-items: center; justify-content: center; gap: 8px; height: 31px; font: 24px/30px Roboto, sans-serif; color: #5c5e60; }
.brand svg { width: 34px; height: 29px; opacity: .6; }
.card { height: 336px; margin-top: 17px; background: #030507; border-radius: 3px; padding: 21px 15px 0; }
.next { margin-top: 7px; }
.count { font-size: 25px; line-height: 28px; font-weight: 900; color: #66686a; }
.count b { color: #7d5f24; }
.spin { width: 40px; height: 40px; margin: 24px auto 0; opacity: .5; }
.fail { margin-top: 21px; color: #6c1f24; }
.note { margin-top: 5px; font-size: 13px; line-height: 18px; white-space: nowrap; margin-left: -15px; margin-right: -15px; }
.show { width: 100%; height: 46px; margin-top: 17px; justify-content: flex-start; padding-left: 16px; background: #06080b; }
.hero { flex: 1; position: relative; background: #05060a; }
.premium { position: absolute; z-index: 1; right: 0; top: 16px; width: 293px; height: 39px; background: #000; display: flex; align-items: center; color: #fff; font-size: 15px; font-weight: 700; padding-left: 17px; white-space: nowrap; overflow: hidden; }
.gift { width: 20px; height: 20px; fill: #fdc93a; }
.buy { color: #fdc93a; padding: 0 19px 0 14px; border-right: 1px solid #333; line-height: 25px; }
.prod { display: flex; align-items: center; gap: 12px; padding-left: 16px; }
.prod svg { width: 16px; height: 16px; }
.stamp { position: absolute; left: 607px; top: 44px; width: 120px; height: 70px; border: 9px double #2e2f32; border-radius: 12px; transform: rotate(12deg); color: #38393c; font: 700 32px/52px Roboto, sans-serif; padding-left: 2px; }
.slogan { position: absolute; right: 44px; top: 216px; font: 900 46px/56px Lato, sans-serif; color: #50432a; }
.slogan i { color: #1d2b50; font-style: normal; }
.band { position: absolute; left: 500px; right: 0; top: 299px; height: 31px; background: linear-gradient(#1c1d1f, #2f3032, #1c1d1f); }
.mail { position: absolute; left: 621px; top: 353px; width: 88px; height: 88px; border-radius: 44px; background: #0e2f4f; border: 4px solid #0a1f36; display: flex; align-items: center; justify-content: center; }
.mail svg { width: 48px; height: 32px; }
.dismiss { position: absolute; left: 3px; top: 467px; color: #aaa; font: 13px/19px "Liberation Sans", sans-serif; }
.toast { position: absolute; left: 424px; top: 8px; width: 194px; height: 48px; border-radius: 3px; background: #ff7375; color: #fff; display: flex; align-items: center; padding: 0 21px 0 18px; }
.toast > svg { width: 20px; height: 20px; margin-right: 18px; }
.toast button { margin-left: auto; }
.toast button svg { width: 13px; height: 13px; }
.dialog { position: absolute; left: 201px; top: 144px; width: 640px; border-radius: 12px; background: #fff; padding: 25px 0 32px; color: #222b33; }
.dialog h1, .dialog h2, .lead { margin: 0 32px; }
.dialog h1 { font-size: 25px; line-height: 30px; font-weight: 700; color: #f4525c; }
.lead { padding-top: 8px; }
.dialog h2 { font-size: 14px; font-weight: 900; padding-top: 27px; line-height: 20px; }
.row { display: flex; align-items: center; height: 49px; margin-top: 8px; background: linear-gradient(#ebebeb, #f8f8f8 50%, #ececec); border-bottom: 1px solid #ccc; padding: 0 17px 0 32px; }
.name { flex: 1; color: #111; }
.name small { display: block; font-size: 11px; line-height: 13px; color: #777; }
.again { width: 129px; height: 32px; gap: 7px; background: #e4eef7; border-radius: 3px; color: #3f93d3; padding-right: 4px; }
.again svg { width: 14px; height: 14px; }
.x { margin-left: 6px; color: #888; }
.x svg { width: 13px; height: 13px; stroke-width: 2; }
.actions { display: flex; justify-content: space-between; margin: 22px 32px 0; }
.actions button { width: 150px; height: 40px; border: 1px solid #c4c4c4; border-radius: 8px; color: #111; font-size: 15px; }
.actions .retry { width: 152px; color: #4a96d2; gap: 6px; padding-right: 8px; }
.retry svg { width: 22px; height: 22px; }
.anyrun { position: absolute; right: 69px; bottom: 20px; display: flex; align-items: center; gap: 7px; color: #777; font: 32px/62px "Liberation Sans Narrow", Roboto, sans-serif; }
.anyrun svg { width: 56px; height: 62px; }

.taskbar { display: flex; align-items: center; height: 27px; flex: none; background: #d6d3ce; border-top: 1px solid #fff; padding: 0 2px; }
.start, .tasks .open { border: 1px solid; border-color: #fff #424142 #424142 #fff; box-shadow: inset -1px -1px #848284; height: 22px; }
.start { width: 52px; gap: 1px; font-weight: 700; font-size: 11px; }
.start svg { width: 16px; height: 16px; }
.tasks { display: flex; gap: 4px; margin-left: 10px; }
.tasks button { width: 30px; height: 22px; }
.tasks svg { width: 17px; height: 17px; }
.tasks .current { background: #fff; border-color: #424142 #fff #fff #424142; box-shadow: none; }
.tray { margin-left: auto; display: flex; align-items: center; gap: 8px; height: 22px; border: 1px solid; border-color: #848284 #fff #fff #848284; padding: 0 1px 0 5px; }
.tray svg { width: 16px; height: 16px; }
.tray .chev { width: 8px; height: 10px; }
.tray time { margin-left: 4px; }
```
